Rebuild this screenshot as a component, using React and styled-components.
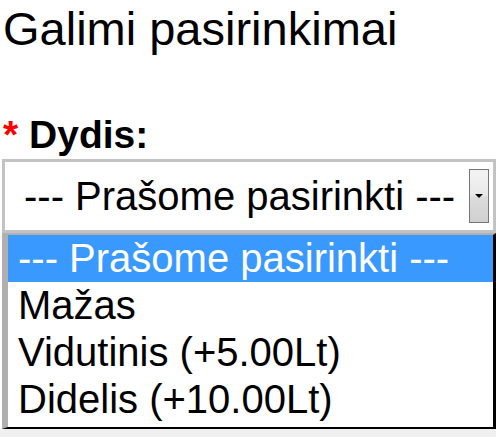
import React from 'react'
import styled, { createGlobalStyle } from 'styled-components'

const GlobalStyle = createGlobalStyle`
  html, body {
    margin: 0;
    padding: 0;
    background: #fff;
  }
  body {
    font-family: "Liberation Sans", Arial, sans-serif;
    color: #000;
  }
`

const Page = styled.div`
  width: 496px;
  height: 437px;
  overflow: hidden;
  display: flex;
  flex-direction: column;
  background: #fff;
`

const Title = styled.h2`
  margin: 5px 0 0 3px;
  font-size: 47px;
  line-height: 47px;
  font-weight: normal;
`

const Label = styled.div`
  margin: 63px 0 0 3px;
  font-size: 39px;
  line-height: 39px;
  font-weight: bold;
`

const Required = styled.span`
  color: #f00;
`

const Select = styled.div`
  margin: 5px 0 0 2px;
  width: 494px;
  height: 74px;
  box-sizing: border-box;
  border: 3px solid #c3c3c3;
  display: flex;
  align-items: center;
  justify-content: space-between;
  padding: 0 4px 0 19px;
  font-size: 40px;
  line-height: 47px;
`

const ArrowButton = styled.div`
  width: 20px;
  height: 54px;
  box-sizing: border-box;
  border: 1px solid #767676;
  background: linear-gradient(#f3f3f3 0%, #e8e8e8 48%, #dcdcdc 52%, #d0d0d0 100%);
  display: flex;
  align-items: center;
  justify-content: center;
`

const Arrow = styled.span`
  width: 0;
  height: 0;
  border-left: 4px solid transparent;
  border-right: 4px solid transparent;
  border-top: 4px solid #000;
`

const Panel = styled.ul`
  list-style: none;
  margin: 0 0 0 2px;
  padding: 0 0 4px 0;
  width: 494px;
  box-sizing: border-box;
  border-top: 2px solid #b0b0b0;
  border-left: 6px solid #b0b0b0;
  border-right: 3px solid #000;
  border-bottom: 2px solid #000;
  background: #fff;
`

const Option = styled.li`
  height: 47px;
  padding-left: 10px;
  font-size: 40px;
  line-height: 47px;
  white-space: nowrap;
  background: ${p => (p.$selected ? '#3a99ff' : '#fff')};
  color: ${p => (p.$selected ? '#fff' : '#000')};
`

const Strip = styled.div`
  flex: 1;
  background: #f0f0f0;
`

const options = [
  '--- Prašome pasirinkti ---',
  'Mažas',
  'Vidutinis (+5.00Lt)',
  'Didelis (+10.00Lt)',
]

const App = () => {
  return (
    <>
      <GlobalStyle />
      <Page>
        <Title>Galimi pasirinkimai</Title>
        <Label>
          <Required>*</Required> Dydis:
        </Label>
        <Select>
          <span>{options[0]}</span>
          <ArrowButton>
            <Arrow />
          </ArrowButton>
        </Select>
        <Panel>
          {options.map((opt, i) => (
            <Option key={opt} $selected={i === 0}>
              {opt}
            </Option>
          ))}
        </Panel>
        <Strip />
      </Page>
    </>
  )
}

export default App
